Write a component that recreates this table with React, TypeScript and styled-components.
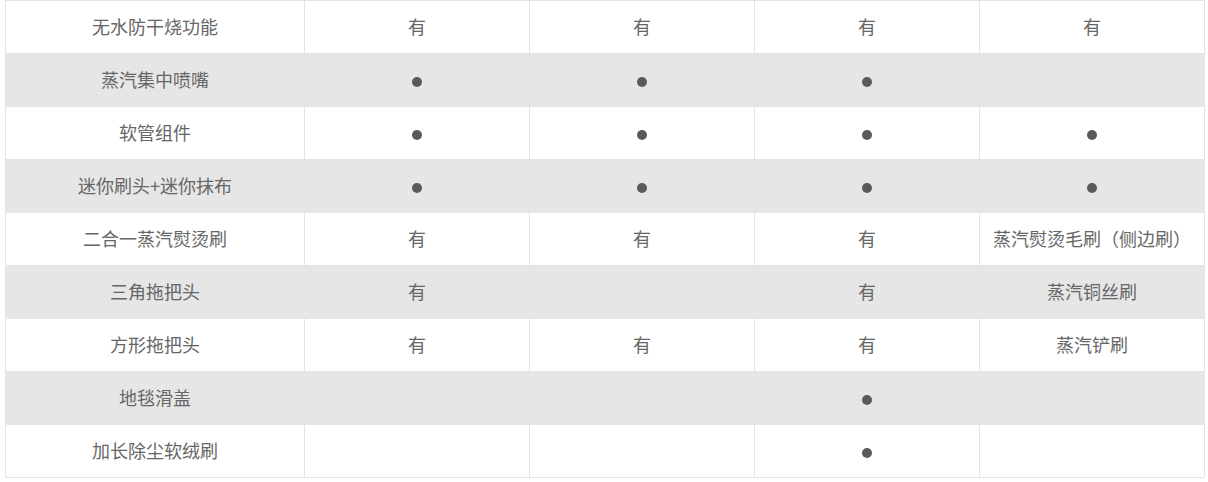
import React from "react";
import styled, { createGlobalStyle } from "styled-components";

const GlobalStyle = createGlobalStyle`
  body {
    margin: 0;
    background: #ffffff;
    font-family: "Noto Sans CJK SC", "Noto Sans", sans-serif;
  }
`;

const Wrapper = styled.div`
  padding: 0 4px 0 5px;
`;

const Table = styled.table`
  width: 1200px;
  border-collapse: collapse;
  table-layout: fixed;
  border: 1px solid #e3e3e3;
`;

const Col = styled.col<{ $wide?: boolean }>`
  width: ${(p) => (p.$wide ? "299px" : "225px")};
`;

const Row = styled.tr<{ $shaded: boolean }>`
  height: 53px;
  background: ${(p) => (p.$shaded ? "#e6e6e6" : "#ffffff")};

  td {
    border: 1px solid ${(p) => (p.$shaded ? "#e6e6e6" : "#e3e3e3")};
  }
`;

const Cell = styled.td`
  padding: 0 0 3px;
  text-align: center;
  vertical-align: middle;
  font-size: 18px;
  color: #666666;
  line-height: 24px;
`;

const Dot = styled.span`
  display: inline-block;
  width: 10px;
  height: 10px;
  border-radius: 50%;
  background: #5a5a5a;
  vertical-align: middle;
`;

const DOT = "●";

const rows: string[][] = [
  ["无水防干烧功能", "有", "有", "有", "有"],
  ["蒸汽集中喷嘴", DOT, DOT, DOT, ""],
  ["软管组件", DOT, DOT, DOT, DOT],
  ["迷你刷头+迷你抹布", DOT, DOT, DOT, DOT],
  ["二合一蒸汽熨烫刷", "有", "有", "有", "蒸汽熨烫毛刷（侧边刷）"],
  ["三角拖把头", "有", "", "有", "蒸汽铜丝刷"],
  ["方形拖把头", "有", "有", "有", "蒸汽铲刷"],
  ["地毯滑盖", "", "", DOT, ""],
  ["加长除尘软绒刷", "", "", DOT, ""],
];

function App() {
  return (
    <Wrapper>
      <GlobalStyle />
      <Table>
        <colgroup>
          <Col $wide />
          <Col />
          <Col />
          <Col />
          <Col />
        </colgroup>
        <tbody>
          {rows.map((row, i) => (
            <Row key={i} $shaded={i % 2 === 1}>
              {row.map((val, j) => (
                <Cell key={j}>
                  {val === DOT ? <Dot role="img" aria-label={DOT} /> : val}
                </Cell>
              ))}
            </Row>
          ))}
        </tbody>
      </Table>
    </Wrapper>
  );
}

export default App;
